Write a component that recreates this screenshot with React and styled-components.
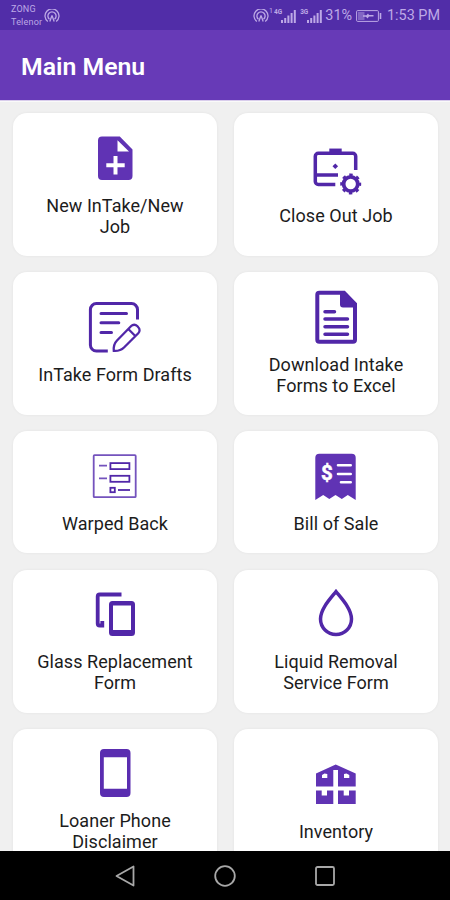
import React from 'react';
import styled, { createGlobalStyle } from 'styled-components';

const GlobalStyle = createGlobalStyle`
  * {
    box-sizing: border-box;
  }
  body {
    margin: 0;
    font-family: Roboto, 'Liberation Sans', sans-serif;
    background: #f0f0f0;
  }
`;

const Screen = styled.div`
  display: flex;
  flex-direction: column;
  width: 450px;
  height: 900px;
  overflow: hidden;
`;

const StatusBar = styled.div`
  display: flex;
  justify-content: space-between;
  height: 30px;
  padding: 0 10px 0 11px;
  background: #512da8;
  color: #bda9e6;
`;

const StatusGroup = styled.div`
  display: flex;
  align-items: center;
  gap: ${(props) => props.gap || 0}px;
  padding-top: 2px;
`;

const Carriers = styled.div`
  font-size: 9px;
  line-height: 13.5px;
  letter-spacing: 0.2px;
`;

const StatusText = styled.span`
  font-size: 14.4px;
  line-height: 28px;
  margin-left: ${(props) => props.left || 0}px;
`;

const Toolbar = styled.header`
  display: flex;
  align-items: center;
  height: 71px;
  padding: 3px 21px 0;
  background: #673ab7;
  border-bottom: 1px solid #d9cdec;
  h1 {
    margin: 0;
    color: #fff;
    font-size: 24.8px;
    font-weight: 600;
  }
`;

const Content = styled.main`
  flex: 1;
  min-height: 0;
  overflow: hidden;
  border-top: 1px solid #fafafa;
`;

const Grid = styled.div`
  display: grid;
  grid-template-columns: 1fr 1fr;
  gap: 16.2px 17px;
  padding: 11px 12px 0 13px;
`;

const Card = styled.div`
  display: flex;
  flex-direction: column;
  align-items: center;
  justify-content: center;
  gap: 10px;
  padding: 19.5px 20px;
  background: #fff;
  border-radius: 14px;
  box-shadow: 0 0 3px rgba(0, 0, 0, 0.06);
  color: #5127a8;
  svg {
    display: block;
    width: 52px;
    height: 52px;
    overflow: visible;
  }
`;

const Label = styled.div`
  color: #1c1c1c;
  font-size: 18px;
  line-height: 21px;
  letter-spacing: 0.06px;
  text-align: center;
  white-space: pre-line;
`;

const NavBar = styled.nav`
  display: flex;
  align-items: center;
  justify-content: center;
  gap: 76px;
  height: 49px;
  background: #000;
`;

const Icon = ({ children, width = 2 }) => (
  <svg viewBox="0 0 52 52" fill="none" stroke="currentColor" strokeWidth={width}>
    {children}
  </svg>
);

const AddFileIcon = () => (
  <Icon width={0}>
    <path
      fill="#6033b4"
      fillRule="evenodd"
      d="M13 3.5H30.8L43.5 16.5V43a4 4 0 0 1-4 4H13a4 4 0 0 1-4-4V7.5a4 4 0 0 1 4-4ZM28.5 7.2V18.6H40ZM24.5 23v7.2h-7.2v4h7.2v7.2h4v-7.2h7.2v-4h-7.2V23Z"
    />
  </Icon>
);

const CaseIcon = () => (
  <Icon width={3.5}>
    <path d="M25.3 41.5H8.3a3 3 0 0 1-3-3V13.3a3 3 0 0 1 3-3H42.7a3 3 0 0 1 3 3V27M5.3 32H28" />
    <path d="M19.3 7.3H31.7" />
    <path d="M25.3 20.5l2.8 2.8-2.8 2.8-2.8-2.8z" fill="currentColor" stroke="none" />
    <circle cx="40.7" cy="41" r="7.1" strokeWidth="3.8" />
    <circle cx="40.7" cy="41" r="9.2" strokeWidth="2.6" strokeDasharray="3.4 3.825" strokeDashoffset="1.7" />
  </Icon>
);

const DraftIcon = () => (
  <Icon width={3}>
    <path d="M48.5 17.5V7.6a6 6 0 0 0-6-6H7.4a6 6 0 0 0-6 6V43a6 6 0 0 0 6 6H18.8" />
    <path d="M12 11.5H37.5M12 20.8H29.8M12 30.5H22.5" strokeLinecap="round" />
    <path
      strokeWidth="2.3"
      d="M24.8 48.9C24.3 44 25.5 41 28 38.5L42.2 24a4.2 4.2 0 0 1 6 0l1.1 1.2a4.2 4.2 0 0 1 0 6L35 45.5C32.5 48 29.5 49.2 24.8 48.9ZM39.3 27l7 7"
    />
  </Icon>
);

const DocumentIcon = () => (
  <Icon width={4}>
    <path d="M9.3.7H34L45 12V47.7a2 2 0 0 1-2 2H9.3a2 2 0 0 1-2-2V2.7a2 2 0 0 1 2-2Z" />
    <path d="M30 0H35L46.5 12V15.5H33a3 3 0 0 1-3-3Z" fill="currentColor" stroke="none" />
    <path d="M15 19.7H24.5M15 27H37.5M15 34.7H37.5M15 42.3H37.5" strokeWidth="3.5" strokeLinecap="round" />
  </Icon>
);

const FormIcon = () => (
  <Icon width={1.8}>
    <rect x="4.7" y="4.2" width="42" height="42" rx="0.8" stroke="#7453bd" />
    <path d="M10 14.7H18M10 27.3H18" stroke="#7453bd" />
    <rect x="21.4" y="12.1" width="19" height="6" />
    <rect x="21.4" y="24.8" width="19" height="6" />
    <rect x="21.4" y="36.8" width="4.4" height="4.4" />
    <path d="M29 39H41" />
  </Icon>
);

const BillIcon = () => (
  <Icon width={2.6}>
    <path
      fill="#6033b4"
      stroke="none"
      d="M9.3 2.7H41.7a4 4 0 0 1 4 4V49L37.8 44 31.8 48 25.5 44 19.3 48 13.2 44 5.3 49V6.7a4 4 0 0 1 4-4Z"
    />
    <path d="M28 14.3H40.7M28 23H40.7M31 31.3H40.7" stroke="#fff" strokeLinecap="round" />
    <text x="17" y="28.7" fill="#fff" stroke="#fff" strokeWidth="0.5" fontSize="20.5" fontWeight="700" textAnchor="middle">
      $
    </text>
  </Icon>
);

const GlassIcon = () => (
  <Icon width={3.8}>
    <path d="M32.5 5.5H10.7a2 2 0 0 0-2 2V34.5a2 2 0 0 0 2 2H13.3V32" />
    <path
      fill="currentColor"
      stroke="none"
      fillRule="evenodd"
      d="M23.5 12H42.5a3.5 3.5 0 0 1 3.5 3.5V43.5a3.5 3.5 0 0 1-3.5 3.5H23.5a3.5 3.5 0 0 1-3.5-3.5V15.5a3.5 3.5 0 0 1 3.5-3.5ZM24 16.5V41H42V16.5Z"
    />
  </Icon>
);

const DropIcon = () => (
  <Icon width={3.5}>
    <path d="M26 2.6C20 10 10.5 20 10.5 30A15.5 15.5 0 0 0 41.5 30C41.5 20 32 10 26 2.6Z" />
  </Icon>
);

const PhoneIcon = () => (
  <Icon width={0}>
    <path
      fill="#5a2db0"
      fillRule="evenodd"
      d="M15 1H37.5a4 4 0 0 1 4 4V45a4 4 0 0 1-4 4H15a4 4 0 0 1-4-4V5a4 4 0 0 1 4-4ZM14.8 9.3V40.7H38V9.3Z"
    />
  </Icon>
);

const InventoryIcon = () => (
  <Icon width={0}>
    <path
      fill="#6033b4"
      fillRule="evenodd"
      d="M25.7 5.5L45.7 14.5V27.5H28V11H23.3V27.5H6V14.5ZM12 16L14.5 14.5L17.3 15V19H12ZM34 15L36.5 14.5L39.3 16V19H34Z"
    />
    <path fill="#6033b4" d="M6 31.5H11.7V36.5H17V31.5H23.3V45H6ZM28 31.5H33.7V36.5H39V31.5H45.7V45H28Z" />
  </Icon>
);

const Hotspot = () => (
  <svg width="16" height="14" viewBox="0 0 16 14" fill="none" stroke="currentColor" strokeWidth="1.3">
    <path d="M3.8 12.5A7 7 0 1 1 12.2 12.5M5.5 10.3A4.1 4.1 0 1 1 10.5 10.3" />
    <path d="M8 6.5L5.8 12.5M8 6.5L10.2 12.5" />
  </svg>
);

const SignalBox = styled.div`
  display: flex;
  align-items: flex-start;
  height: 14px;
  margin-left: ${(props) => props.$left}px;
  font-size: 6.5px;
  font-weight: 700;
  line-height: 6px;
  svg {
    margin-left: -1px;
  }
`;

const Signal = ({ type, left }) => (
  <SignalBox $left={left}>
    {type}
    <svg width="15" height="14" viewBox="0 0 15 14" fill="currentColor">
      <path d="M0 11h2v3H0zM3.2 9h2v5h-2zM6.4 6.5h2V14h-2zM9.6 4h2v10h-2zM12.8 1h2v13h-2z" />
    </svg>
  </SignalBox>
);

const SimIndex = styled.span`
  align-self: flex-start;
  padding-top: 5px;
  font-size: 7px;
  line-height: 8px;
`;

const Battery = () => (
  <svg width="26" height="12" viewBox="0 0 26 12" fill="none" stroke="currentColor">
    <rect x="0.6" y="0.6" width="21.8" height="10.8" rx="1" />
    <path d="M2 2h6.5v8H2z" fill="#8265c4" stroke="none" />
    <path d="M24.5 3v6" strokeWidth="1.6" />
    <path d="M7 5.3h3.5L12 3.5 13 5h4.5v1.5h-4.5L11.5 8.5 10 6.7H7z" fill="currentColor" stroke="none" />
  </svg>
);

const items = [
  { label: 'New InTake/New\nJob', icon: AddFileIcon },
  { label: 'Close Out Job', icon: CaseIcon },
  { label: 'InTake Form Drafts', icon: DraftIcon },
  { label: 'Download Intake\nForms to Excel', icon: DocumentIcon },
  { label: 'Warped Back', icon: FormIcon },
  { label: 'Bill of Sale', icon: BillIcon },
  { label: 'Glass Replacement\nForm', icon: GlassIcon },
  { label: 'Liquid Removal\nService Form', icon: DropIcon },
  { label: 'Loaner Phone\nDisclaimer', icon: PhoneIcon },
  { label: 'Inventory', icon: InventoryIcon },
];

export default function App() {
  return (
    <>
      <GlobalStyle />
      <Screen>
        <StatusBar>
          <StatusGroup gap={2}>
            <Carriers>
              <div>ZONG</div>
              <div>Telenor</div>
            </Carriers>
            <Hotspot />
          </StatusGroup>
          <StatusGroup>
            <Hotspot />
            <SimIndex>1</SimIndex>
            <Signal type="4G" left={1} />
            <Signal type="3G" left={4} />
            <StatusText left={3}>31%</StatusText>
            <StatusText left={4} />
            <Battery />
            <StatusText left={5}>1:53 PM</StatusText>
          </StatusGroup>
        </StatusBar>
        <Toolbar>
          <h1>Main Menu</h1>
        </Toolbar>
        <Content>
          <Grid>
            {items.map(({ label, icon: ItemIcon }) => (
              <Card key={label}>
                <ItemIcon />
                <Label>{label}</Label>
              </Card>
            ))}
          </Grid>
        </Content>
        <NavBar>
          <svg width="24" height="24" viewBox="0 0 24 24" fill="none" stroke="#a8a8a8" strokeWidth="1.8">
            <path d="M20.5 2.5V21.5L3.5 12Z" strokeLinejoin="round" />
          </svg>
          <svg width="24" height="24" viewBox="0 0 24 24" fill="none" stroke="#a8a8a8" strokeWidth="1.8">
            <circle cx="12" cy="12" r="9.8" />
          </svg>
          <svg width="24" height="24" viewBox="0 0 24 24" fill="none" stroke="#a8a8a8" strokeWidth="1.8">
            <rect x="3" y="3" width="18" height="18" rx="1.5" />
          </svg>
        </NavBar>
      </Screen>
    </>
  );
}
